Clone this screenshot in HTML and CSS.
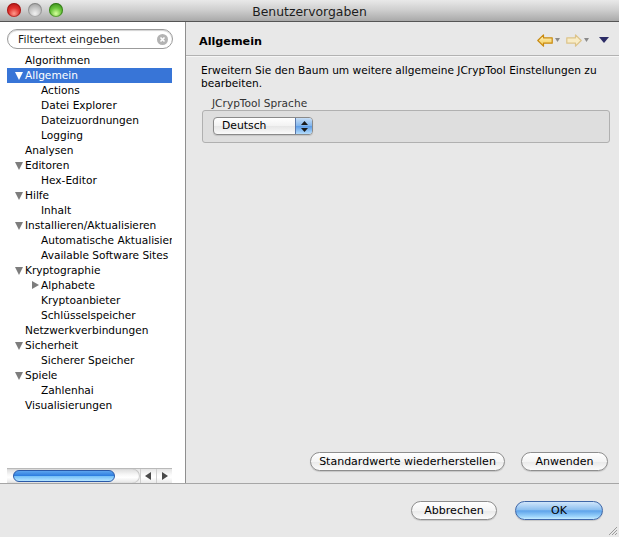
FILE: index.html
```html
<!DOCTYPE html>
<html lang="de">
<head>
<meta charset="utf-8">
<title>Benutzervorgaben</title>
<link rel="stylesheet" href="styles.css">
</head>
<body>
<div class="window">
  <div class="titlebar">
    <div class="lights">
      <span class="light red"></span>
      <span class="light gray"></span>
      <span class="light green"></span>
    </div>
    <div class="title">Benutzervorgaben</div>
  </div>
  <div class="main">
    <div class="sidebar">
      <div class="search">
        <span class="search-text">Filtertext eingeben</span>
        <span class="clear">
          <svg width="11" height="11" viewBox="0 0 11 11"><circle cx="5.5" cy="5.5" r="5.5" fill="#b3b3b3"/><path d="M3.5 3.5 L7.5 7.5 M7.5 3.5 L3.5 7.5" stroke="#fff" stroke-width="1.6"/></svg>
        </span>
      </div>
      <ul class="tree">
        <li class="row l0"><span class="tw"></span>Algorithmen</li>
        <li class="row l0 sel"><span class="tw down"></span>Allgemein</li>
        <li class="row l1"><span class="tw"></span>Actions</li>
        <li class="row l1"><span class="tw"></span>Datei Explorer</li>
        <li class="row l1"><span class="tw"></span>Dateizuordnungen</li>
        <li class="row l1"><span class="tw"></span>Logging</li>
        <li class="row l0"><span class="tw"></span>Analysen</li>
        <li class="row l0"><span class="tw down"></span>Editoren</li>
        <li class="row l1"><span class="tw"></span>Hex-Editor</li>
        <li class="row l0"><span class="tw down"></span>Hilfe</li>
        <li class="row l1"><span class="tw"></span>Inhalt</li>
        <li class="row l0"><span class="tw down"></span>Installieren/Aktualisieren</li>
        <li class="row l1"><span class="tw"></span>Automatische Aktualisierung</li>
        <li class="row l1"><span class="tw"></span>Available Software Sites</li>
        <li class="row l0"><span class="tw down"></span>Kryptographie</li>
        <li class="row l1"><span class="tw right"></span>Alphabete</li>
        <li class="row l1"><span class="tw"></span>Kryptoanbieter</li>
        <li class="row l1"><span class="tw"></span>Schlüsselspeicher</li>
        <li class="row l0"><span class="tw"></span>Netzwerkverbindungen</li>
        <li class="row l0"><span class="tw down"></span>Sicherheit</li>
        <li class="row l1"><span class="tw"></span>Sicherer Speicher</li>
        <li class="row l0"><span class="tw down"></span>Spiele</li>
        <li class="row l1"><span class="tw"></span>Zahlenhai</li>
        <li class="row l0"><span class="tw"></span>Visualisierungen</li>
      </ul>
      <div class="hscroll">
        <div class="track"><div class="thumb"></div></div>
        <div class="arrow">
          <svg width="7" height="8" viewBox="0 0 7 8"><path d="M6 0 L6 8 L0 4 Z" fill="#4a4a4a"/></svg>
        </div>
        <div class="arrow">
          <svg width="7" height="8" viewBox="0 0 7 8"><path d="M1 0 L1 8 L7 4 Z" fill="#4a4a4a"/></svg>
        </div>
      </div>
    </div>
    <div class="content">
      <div class="header">
        <div class="header-title">Allgemein</div>
        <div class="nav">
          <svg class="nav-arrow" width="16" height="13" viewBox="0 0 16 13">
            <defs><linearGradient id="gy" x1="0" y1="0" x2="0" y2="1"><stop offset="0" stop-color="#fff6c8"/><stop offset="1" stop-color="#f3c64a"/></linearGradient></defs>
            <path d="M0.8 6.5 L6.5 0.8 L6.5 3.8 L15.2 3.8 L15.2 9.2 L6.5 9.2 L6.5 12.2 Z" fill="url(#gy)" stroke="#c98a10" stroke-width="1.2" stroke-linejoin="round"/>
          </svg>
          <svg class="mini" width="5" height="4" viewBox="0 0 5 4"><path d="M0 0 L5 0 L2.5 4 Z" fill="#8a8a8a"/></svg>
          <svg class="nav-arrow" width="16" height="13" viewBox="0 0 16 13">
            <path d="M15.2 6.5 L9.5 0.8 L9.5 3.8 L0.8 3.8 L0.8 9.2 L9.5 9.2 L9.5 12.2 Z" fill="#f8ecc6" stroke="#dcc38a" stroke-width="1.2" stroke-linejoin="round"/>
          </svg>
          <svg class="mini" width="5" height="4" viewBox="0 0 5 4"><path d="M0 0 L5 0 L2.5 4 Z" fill="#8a8a8a"/></svg>
          <svg class="menu" width="10" height="6" viewBox="0 0 10 6"><path d="M0 0 L10 0 L5 6 Z" fill="#2c2c66"/></svg>
        </div>
      </div>
      <div class="body">
        <p class="desc">Erweitern Sie den Baum um weitere allgemeine JCrypTool Einstellungen zu bearbeiten.</p>
        <div class="group-label">JCrypTool Sprache</div>
        <div class="group">
          <div class="select">
            <span class="select-text">Deutsch</span>
            <span class="stepper">
              <svg width="7" height="11" viewBox="0 0 7 11"><path d="M3.5 0 L7 4 L0 4 Z M0 7 L7 7 L3.5 11 Z" fill="#1a1a1a"/></svg>
            </span>
          </div>
        </div>
        <div class="actions">
          <button class="btn wide">Standardwerte wiederherstellen</button>
          <button class="btn apply">Anwenden</button>
        </div>
      </div>
    </div>
  </div>
  <div class="footer">
    <button class="btn cancel">Abbrechen</button>
    <button class="btn ok">OK</button>
    <svg class="grip" width="11" height="11" viewBox="0 0 11 11"><path d="M10 2 L2 10 M10 5 L5 10 M10 8 L8 10" stroke="#9a9a9a" stroke-width="1"/></svg>
  </div>
</div>
</body>
</html>
```

FILE: styles.css
```css
* { box-sizing: border-box; }
html, body { margin: 0; padding: 0; }
body {
  width: 619px;
  height: 537px;
  overflow: hidden;
  font-family: "DejaVu Sans", "Noto Sans", sans-serif;
  font-size: 10.6px;
  color: #000;
  background: #e8e8e8;
}
.window {
  width: 619px;
  height: 537px;
  display: flex;
  flex-direction: column;
  background: #e8e8e8;
}
.titlebar {
  height: 22px;
  flex: none;
  position: relative;
  background: linear-gradient(#e9e9e9, #d0d0d0 45%, #a9a9a9);
  border-bottom: 1px solid #555;
  display: flex;
  align-items: center;
  justify-content: center;
}
.lights {
  position: absolute;
  left: 7px;
  top: 3px;
  display: flex;
  gap: 7px;
}
.light {
  width: 14px;
  height: 14px;
  border-radius: 50%;
  display: block;
}
.light.red {
  background: radial-gradient(circle at 50% 75%, #ff9a8c 0, #e0302c 45%, #a40d0c 100%);
  box-shadow: inset 0 0 0 1px rgba(120,0,0,.45);
}
.light.gray {
  background: radial-gradient(circle at 50% 75%, #f0f0f0 0, #c6c6c6 45%, #8d8d8d 100%);
  box-shadow: inset 0 0 0 1px rgba(80,80,80,.35);
}
.light.green {
  background: radial-gradient(circle at 50% 75%, #d7ff9e 0, #68c43a 45%, #2c7a10 100%);
  box-shadow: inset 0 0 0 1px rgba(20,80,0,.45);
}
.title {
  font-size: 12.4px;
  color: #1c1c1c;
  padding-top: 1px;
}
.main {
  height: 462px;
  flex: none;
  display: flex;
  border-bottom: 1px solid #a6a6a6;
}
.sidebar {
  width: 186px;
  flex: none;
  background: #fff;
  border-right: 1px solid #8f8f8f;
  display: flex;
  flex-direction: column;
}
.search {
  margin: 7px 0 0 7px;
  width: 166px;
  height: 20px;
  border: 1px solid #9b9b9b;
  border-radius: 10px;
  box-shadow: inset 0 1px 1px rgba(0,0,0,.18);
  display: flex;
  align-items: center;
  justify-content: space-between;
  padding: 0 4px 0 10px;
  background: #fff;
}
.search-text { color: #1a1a1a; font-size: 10.8px; }
.clear { display: flex; }
.clear svg { display: block; }
.tree {
  list-style: none;
  margin: 4px 0 0 0;
  padding: 0 13px 0 7px;
  flex: 1;
  overflow: hidden;
}
.row {
  height: 15px;
  line-height: 15px;
  white-space: nowrap;
  overflow: hidden;
  display: flex;
  align-items: center;
}
.row.l0 { padding-left: 8px; }
.row.l1 { padding-left: 24px; }
.row.sel { background: #3875d7; color: #fff; }
.tw {
  width: 10px;
  height: 15px;
  flex: none;
  position: relative;
}
.tw.down::before {
  content: "";
  position: absolute;
  left: 0;
  top: 4px;
  border-left: 4.5px solid transparent;
  border-right: 4.5px solid transparent;
  border-top: 8px solid #7d7d7d;
}
.row.sel .tw.down::before { border-top-color: #fff; }
.tw.right::before {
  content: "";
  position: absolute;
  left: 1px;
  top: 3px;
  border-top: 4.5px solid transparent;
  border-bottom: 4.5px solid transparent;
  border-left: 7px solid #7d7d7d;
}
.hscroll {
  margin: 0 13px 0 7px;
  height: 15px;
  flex: none;
  display: flex;
  border-top: 1px solid #b9b9b9;
  background: linear-gradient(#e4e4e4, #fafafa 40%, #fff 60%, #e9e9e9);
}
.track {
  flex: 1;
  position: relative;
  border-radius: 0 8px 8px 0;
  background: linear-gradient(#dcdcdc, #f7f7f7 40%, #fff 60%, #e4e4e4);
  box-shadow: inset -1px 0 1px rgba(0,0,0,.2);
}
.thumb {
  position: absolute;
  left: 6px;
  top: 1px;
  width: 102px;
  height: 12px;
  border-radius: 6px;
  border: 1px solid #2a59a8;
  background: linear-gradient(#5da5ef, #2f7fe0 45%, #78c2f8 55%, #b5e4ff);
}
.arrow {
  width: 16px;
  flex: none;
  display: flex;
  align-items: center;
  justify-content: center;
  border-left: 1px solid #cfcfcf;
}
.arrow svg { display: block; }
.content {
  flex: 1;
  display: flex;
  flex-direction: column;
  min-width: 0;
}
.header {
  height: 34px;
  flex: none;
  display: flex;
  align-items: center;
  justify-content: space-between;
  padding: 0 10px 0 13px;
  border-bottom: 1px solid #b2b2b2;
  box-shadow: 0 1px 0 #f6f6f6;
}
.header-title {
  font-weight: bold;
  font-size: 11.2px;
  padding-top: 5px;
}
.nav {
  display: flex;
  align-items: center;
  padding-top: 3px;
}
.nav svg { display: block; }
.nav-arrow { margin-right: 2px; }
.mini { margin-right: 6px; }
.menu { margin-left: 4px; }
.body {
  flex: 1;
  display: flex;
  flex-direction: column;
  padding: 8px 9px 12px 15px;
}
.desc {
  margin: 0;
  line-height: 13px;
  font-size: 10.6px;
}
.group-label {
  margin: 6px 0 0 11px;
  line-height: 14px;
  color: #333;
}
.group {
  margin-left: 1px;
  height: 33px;
  border: 1px solid #b0b0b0;
  border-radius: 3px;
  background: #dedede;
  padding: 6px 0 0 10px;
}
.select {
  width: 100px;
  height: 18px;
  border: 1px solid #8a8a8a;
  border-radius: 4px;
  display: flex;
  overflow: hidden;
  background: linear-gradient(#ffffff, #f2f2f2 50%, #e6e6e6 51%, #fafafa);
  box-shadow: 0 1px 1px rgba(0,0,0,.12);
}
.select-text {
  flex: 1;
  padding-left: 8px;
  line-height: 16px;
  font-size: 10.8px;
}
.stepper {
  width: 17px;
  flex: none;
  display: flex;
  align-items: center;
  justify-content: center;
  border-left: 1px solid #5977a8;
  background: linear-gradient(#c7def6, #7fb4ec 50%, #5d9ce6 51%, #b4dcfb);
}
.stepper svg { display: block; }
.actions {
  margin-top: auto;
  display: flex;
  justify-content: flex-end;
  gap: 16px;
  padding-right: 2px;
}
.btn {
  font-family: "DejaVu Sans", "Noto Sans", sans-serif;
  font-size: 11px;
  color: #000;
  height: 19px;
  padding: 0;
  border: 1px solid #8e8e8e;
  border-radius: 10px;
  background: linear-gradient(#ffffff, #f4f4f4 50%, #e9e9e9 51%, #fbfbfb);
  box-shadow: 0 1px 1px rgba(0,0,0,.15);
  line-height: 17px;
}
.btn.wide { width: 195px; }
.btn.apply { width: 87px; }
.footer {
  flex: 1;
  position: relative;
  display: flex;
  align-items: center;
  justify-content: flex-end;
  gap: 18px;
  padding: 0 16px 1px 0;
}
.btn.cancel { width: 86px; }
.btn.ok {
  width: 88px;
  border-color: #3f67a8;
  background: linear-gradient(#d0e6fb, #8ec0f0 45%, #5ea3ea 52%, #9bd3fb 85%, #c6ecff);
}
.grip {
  position: absolute;
  right: 1px;
  bottom: 1px;
}
```
